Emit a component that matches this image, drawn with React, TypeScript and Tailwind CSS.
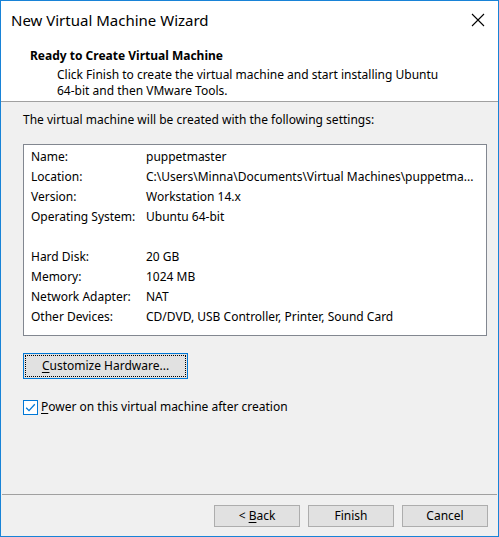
import React from "react";

const font = { fontFamily: '"Segoe UI", "Noto Sans", "Open Sans", sans-serif' };

const rows: [string, string][] = [
  ["Name:", "puppetmaster"],
  ["Location:", "C:\\Users\\Minna\\Documents\\Virtual Machines\\puppetma..."],
  ["Version:", "Workstation 14.x"],
  ["Operating System:", "Ubuntu 64-bit"],
  ["", ""],
  ["Hard Disk:", "20 GB"],
  ["Memory:", "1024 MB"],
  ["Network Adapter:", "NAT"],
  ["Other Devices:", "CD/DVD, USB Controller, Printer, Sound Card"],
];

function Btn({ children }: { children: React.ReactNode }) {
  return (
    <div className="w-[86px] h-[22px] border border-[#adadad] bg-[#e1e1e1] flex items-center justify-center text-[12px] text-black">
      {children}
    </div>
  );
}

export default function App() {
  return (
    <div
      className="w-[499px] h-[537px] border border-[#1883d7] bg-[#f0f0f0] flex flex-col text-black overflow-hidden"
      style={font}
    >
      {/* title bar */}
      <div className="h-[38px] bg-white flex items-center justify-between pl-[10px] pr-[13px] shrink-0">
        <span className="text-[15px] leading-none">New Virtual Machine Wizard</span>
        <svg width="14" height="14" viewBox="0 0 14 14">
          <path d="M1 1 L13 13 M13 1 L1 13" stroke="#000" strokeWidth="1.1" />
        </svg>
      </div>
      {/* header */}
      <div className="h-[63px] bg-white border-b border-[#a0a0a0] shrink-0 flex flex-col pl-[29px] pt-[8px]">
        <div className="text-[12px] font-bold leading-[18px]">Ready to Create Virtual Machine</div>
        <div className="pl-[27px] text-[12px] leading-[16px] mt-[2px]">
          Click Finish to create the virtual machine and start installing Ubuntu
          <br />
          64-bit and then VMware Tools.
        </div>
      </div>
      {/* body */}
      <div className="flex-1 flex flex-col px-[22px]">
        <div className="text-[12px] leading-[16px] mt-[10px]">
          The virtual machine will be created with the following settings:
        </div>
        <div className="mt-[16px] w-[464px] h-[192px] bg-white border border-[#828790] pt-[2px] pl-[7px]">
          {rows.map(([k, v], i) => (
            <div key={i} className="flex h-[20px] items-center text-[12px] whitespace-nowrap">
              <span className="w-[115px]">{k}</span>
              <span>{v}</span>
            </div>
          ))}
        </div>
        <div className="mt-[17px] w-[165px] h-[26px] border border-[#0078d7] bg-[#e1e1e1] p-[1px]">
          <div className="w-full h-full border border-dotted border-black flex items-center justify-center text-[12px]">
            <span>
              <span className="underline underline-offset-2">C</span>ustomize Hardware...
            </span>
          </div>
        </div>
        <div className="mt-[19px] flex items-center gap-[3px]">
          <div className="w-[15px] h-[15px] border border-[#0078d7] bg-white flex items-center justify-center">
            <svg width="11" height="11" viewBox="0 0 11 11">
              <path d="M1.2 5.8 L4 8.6 L9.8 2.2" stroke="#0078d7" strokeWidth="1.3" fill="none" />
            </svg>
          </div>
          <span className="text-[12px]">
            <span className="underline underline-offset-2">P</span>ower on this virtual machine after creation
          </span>
        </div>
      </div>
      {/* footer */}
      <div className="h-[42px] border-t border-[#a0a0a0] mx-[1px] shrink-0 flex items-start justify-end gap-[8px] pr-[9px] pt-[10px]">
        <Btn>
          &lt;&nbsp;<span className="underline underline-offset-2">B</span>ack
        </Btn>
        <Btn>Finish</Btn>
        <Btn>Cancel</Btn>
      </div>
    </div>
  );
}
